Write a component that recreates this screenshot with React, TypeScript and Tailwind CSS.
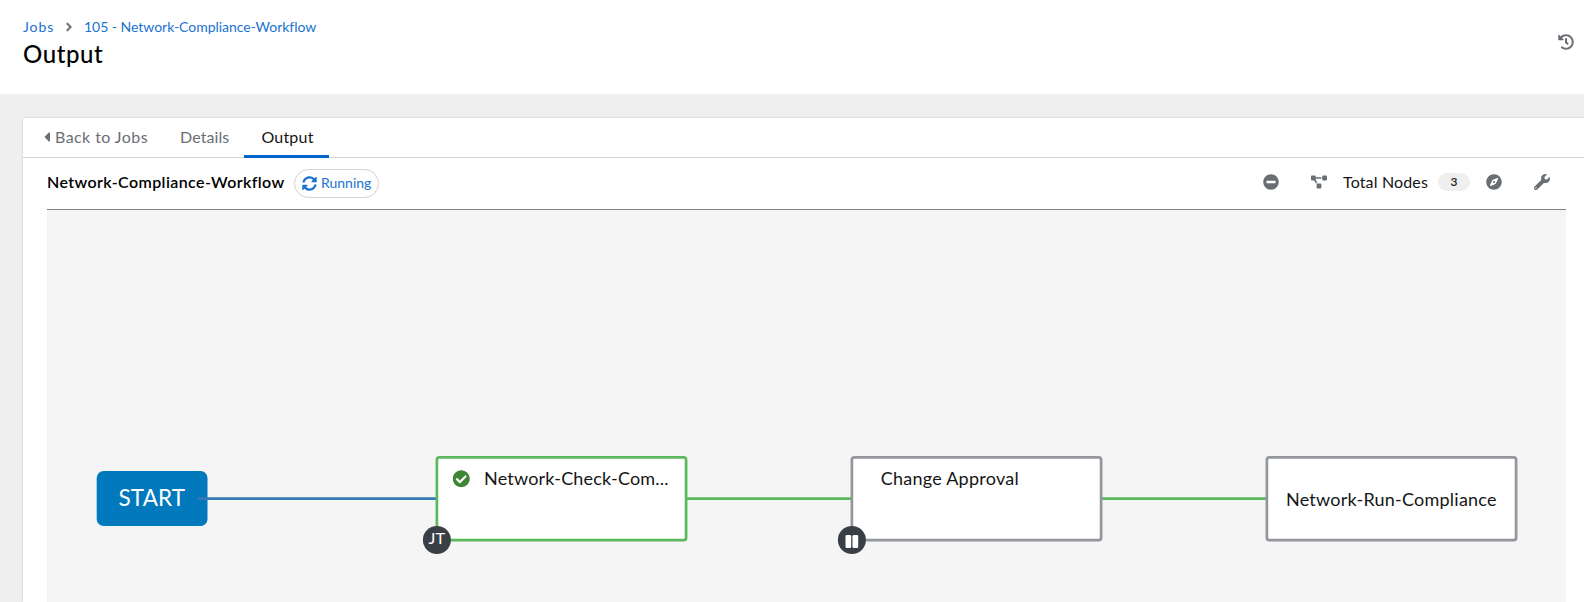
import type { ReactNode } from "react";
import {
  FaAngleRight,
  FaCaretLeft,
  FaCheckCircle,
  FaCompass,
  FaHistory,
  FaMinusCircle,
  FaProjectDiagram,
  FaSyncAlt,
  FaWrench,
} from "react-icons/fa";

const GREEN = "#5cb85c";
const GREY = "#93969a";

function NodeBox({ x, color, children }: { x: number; color: string; children: ReactNode }) {
  return (
    <g transform={`translate(${x} 246)`}>
      <rect x="1.4" y="1.3" width="249.2" height="82.9" rx="2.5" fill="#fff" stroke={color} strokeWidth="2.7" />
      {children}
    </g>
  );
}

function WorkflowGraph() {
  return (
    <svg className="block h-[392px] w-[1519px] font-[Lato,sans-serif]" viewBox="0 0 1519 392">
      <rect x="49.7" y="261" width="110.8" height="55" rx="7" fill="#0279bd" />
      <text x="71.5" y="296.3" fontSize="22.5" fill="#fff" textLength="66.5">START</text>
      <path d="M151 288.6H389" stroke="#337ab7" strokeWidth="2.7" />
      <path d="M640 288.6H804M1054 288.6H1219" stroke={GREEN} strokeWidth="2.7" />
      <NodeBox x={388.5} color={GREEN}>
        <FaCheckCircle x="17" y="14" size={17.5} color="#3e8635" />
        <text x="48.5" y="29.3" fontSize="18" fill="#151515" textLength="184.5">Network-Check-Com...</text>
        <circle cx="1.4" cy="84" r="14" fill="#393f44" />
        <text x="-6.9" y="88.2" fontSize="14.5" fill="#fff" textLength="16.5" lengthAdjust="spacingAndGlyphs">JT</text>
      </NodeBox>
      <NodeBox x={803.5} color={GREY}>
        <text x="30.2" y="29.3" fontSize="18" fill="#151515" textLength="138">Change Approval</text>
        <circle cx="1.4" cy="84" r="14" fill="#393f44" />
        <rect x="-5" y="79" width="5.7" height="13" rx="1.3" fill="#fff" />
        <rect x="2" y="79" width="5.7" height="13" rx="1.3" fill="#fff" />
      </NodeBox>
      <NodeBox x={1218.5} color={GREY}>
        <text x="20.5" y="50" fontSize="18" fill="#151515" textLength="210.5">Network-Run-Compliance</text>
      </NodeBox>
    </svg>
  );
}

export default function App() {
  return (
    <div className="flex h-[602px] w-[1584px] flex-col overflow-hidden bg-[#efefef] font-[Lato,sans-serif] text-[#151515]">
      <header className="flex h-[94px] shrink-0 justify-between bg-white pr-[10px] pl-[23px]">
        <div className="pt-[17px]">
          <nav className="flex h-5 items-center text-sm leading-5 text-[#1a73cf]">
            <span className="w-[43px] tracking-[0.9px]">Jobs</span>
            <FaAngleRight className="mr-[9px] size-[14px] -translate-x-1 text-[#77797c]" />
            <span className="-ml-[5px] tracking-[-0.03px] whitespace-nowrap">105 - Network-Compliance-Workflow</span>
          </nav>
          <h1 className="text-2xl leading-[34px] font-medium tracking-[0.6px] text-black">Output</h1>
        </div>
        <FaHistory className="mt-[34px] size-4 text-[#6a6e73]" />
      </header>

      <main className="mt-6 ml-[23px] flex flex-1 flex-col bg-white shadow-[0_0_2px_rgba(0,0,0,0.2)]">
        <div className="flex h-10 shrink-0 items-stretch border-b border-[#d2d2d2] pl-[22px] text-base leading-[38px] text-[#6a6e73]">
          <a className="flex h-[38px] w-[111px] items-center tracking-[0.43px] whitespace-nowrap">
            <FaCaretLeft className="-ml-0.5 mr-1 h-4 w-[8px]" />
            Back to Jobs
          </a>
          <a className="ml-6 w-16 tracking-[0.1px]">Details</a>
          <a className="-mb-px w-[85px] border-b-[3px] border-[#06c] pl-0.5 text-center tracking-[0.2px] text-[#151515]">Output</a>
        </div>
        <div className="mr-[18px] ml-6 flex h-[52px] shrink-0 items-center border-b border-[#808285] pb-px">
          <h2 className="w-[247px] pb-0.5 text-base font-semibold tracking-[0.4px] whitespace-nowrap text-black">Network-Compliance-Workflow</h2>
          <span className="flex h-[29px] w-[85px] items-center gap-1 rounded-full border border-[#d2d2d2] pl-[7px] text-sm text-[#1a73cf]">
            <FaSyncAlt className="size-[15px]" />
            Running
          </span>
          <div className="ml-auto flex items-center pb-0.5 text-[#6a6e73]">
            <FaMinusCircle className="mr-8 size-4" />
            <FaProjectDiagram className="mr-4 size-4" />
            <span className="w-[95px] text-base tracking-[0.15px] whitespace-nowrap text-[#151515]">Total Nodes</span>
            <span className="mr-4 h-[18px] w-8 rounded-full bg-[#efefef] text-center text-xs leading-[18px] font-semibold text-[#151515]">3</span>
            <FaCompass className="mr-8 size-4" />
            <FaWrench className="mr-4 size-4" />
          </div>
        </div>
        <section className="ml-6 h-[392px] w-[1519px] bg-[#f5f5f5]">
          <WorkflowGraph />
        </section>
      </main>
    </div>
  );
}
